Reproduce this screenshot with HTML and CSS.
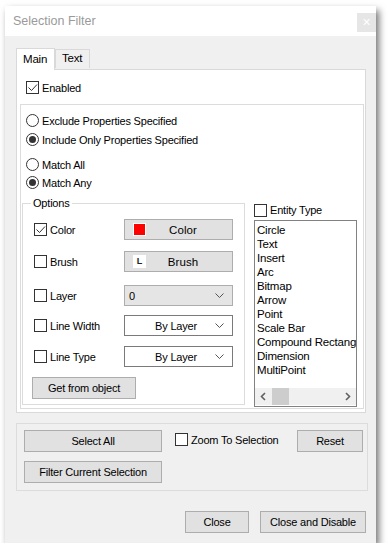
FILE: index.html
```html
<!DOCTYPE html>
<html>
<head>
<meta charset="utf-8">
<link rel="stylesheet" href="styles.css">
</head>
<body>
<div class="window">
  <div class="titlebar">
    <span class="title">Selection Filter</span>
    <span class="close-x">×</span>
  </div>
  <div class="content">
    <div class="tabs">
      <div class="tab active">Main</div>
      <div class="tab">Text</div>
    </div>
    <div class="panel">
      <label class="check enabled-row"><span class="cb checked"><svg viewBox="0 0 11 11"><polyline points="1.5,5.5 4.5,8.5 10,2.5"/></svg></span>Enabled</label>
      <div class="filterbox">
        <div class="radios">
          <label class="radio"><span class="rb"></span>Exclude Properties Specified</label>
          <label class="radio"><span class="rb on"></span>Include Only Properties Specified</label>
        </div>
        <div class="radios second">
          <label class="radio"><span class="rb"></span>Match All</label>
          <label class="radio"><span class="rb on"></span>Match Any</label>
        </div>
        <div class="lower">
          <div class="options">
            <span class="legend">Options</span>
            <div class="opt r1">
              <label class="check"><span class="cb checked"><svg viewBox="0 0 11 11"><polyline points="1.5,5.5 4.5,8.5 10,2.5"/></svg></span>Color</label>
              <div class="btn ctl"><span class="swatch"></span><span class="btxt">Color</span></div>
            </div>
            <div class="opt r2">
              <label class="check"><span class="cb"></span>Brush</label>
              <div class="btn ctl"><span class="brushicon">L</span><span class="btxt">Brush</span></div>
            </div>
            <div class="opt r3">
              <label class="check"><span class="cb"></span>Layer</label>
              <div class="combo ctl grey"><span class="ctext left">0</span><svg class="chev" viewBox="0 0 9 5"><polyline points="0.5,0.5 4.5,4.5 8.5,0.5"/></svg></div>
            </div>
            <div class="opt r4">
              <label class="check"><span class="cb"></span>Line Width</label>
              <div class="combo ctl"><span class="ctext">By Layer</span><svg class="chev" viewBox="0 0 9 5"><polyline points="0.5,0.5 4.5,4.5 8.5,0.5"/></svg></div>
            </div>
            <div class="opt r5">
              <label class="check"><span class="cb"></span>Line Type</label>
              <div class="combo ctl"><span class="ctext">By Layer</span><svg class="chev" viewBox="0 0 9 5"><polyline points="0.5,0.5 4.5,4.5 8.5,0.5"/></svg></div>
            </div>
            <div class="btn getbtn">Get from object</div>
          </div>
          <div class="entity">
            <label class="check"><span class="cb"></span>Entity Type</label>
            <div class="listbox">
              <ul class="items">
                <li>Circle</li><li>Text</li><li>Insert</li><li>Arc</li><li>Bitmap</li><li>Arrow</li><li>Point</li><li>Scale Bar</li><li>Compound Rectangle</li><li>Dimension</li><li>MultiPoint</li>
              </ul>
              <div class="hscroll">
                <svg class="arr" viewBox="0 0 17 17"><polyline points="10,5 6.5,8.5 10,12"/></svg>
                <span class="thumb"></span>
                <span class="track"></span>
                <svg class="arr" viewBox="0 0 17 17"><polyline points="7,5 10.5,8.5 7,12"/></svg>
              </div>
            </div>
          </div>
        </div>
      </div>
    </div>
    <div class="actions">
      <div class="actcol">
        <div class="btn wide">Select All</div>
        <div class="btn wide">Filter Current Selection</div>
      </div>
      <label class="check zoom"><span class="cb"></span>Zoom To Selection</label>
      <div class="btn reset">Reset</div>
    </div>
    <div class="footer">
      <div class="btn closebtn">Close</div>
      <div class="btn disablebtn">Close and Disable</div>
    </div>
  </div>
</div>
</body>
</html>
```
FILE: styles.css
```css
* { box-sizing: border-box; }
html, body { margin: 0; padding: 0; background: #ffffff; }
body {
  font-family: "Liberation Sans", Arial, sans-serif;
  font-size: 11px;
  letter-spacing: -0.2px;
  color: #000;
  padding: 6px 0 0 5px;
}
.window {
  width: 371px;
  height: 537px;
  background: #f0f0f0;
  box-shadow: 3px 4px 7px rgba(0,0,0,0.55);
  display: flex;
  flex-direction: column;
}
.titlebar {
  height: 30px;
  background: #fff;
  display: flex;
  align-items: flex-start;
  justify-content: space-between;
}
.title {
  color: #9a9a9a;
  font-size: 12.5px;
  letter-spacing: 0;
  margin: 8px 0 0 8px;
}
.close-x {
  width: 19px;
  height: 19px;
  margin-top: 7px;
  background: #e6e6e6;
  color: #fff;
  font-size: 14px;
  line-height: 18px;
  text-align: center;
}
.content {
  flex: 1;
  padding: 11px 0 0 11px;
  display: flex;
  flex-direction: column;
}
.tabs {
  display: flex;
  align-items: flex-end;
  height: 22px;
  position: relative;
  z-index: 1;
}
.tab {
  height: 19px;
  width: 35px;
  padding: 0 0 0 6px;
  border: 1px solid #d9d9d9;
  border-bottom: none;
  background: #f0f0f0;
  line-height: 17px;
  margin-bottom: 1px;
  font-size: 11.5px;
}
.tab.active {
  height: 22px;
  background: #fff;
  margin-bottom: -1px;
  line-height: 20px;
  width: 39px;
}
.panel {
  width: 350px;
  height: 344px;
  background: #fff;
  border: 1px solid #d9d9d9;
  padding: 11px 1px 0 3px;
}
.check {
  display: flex;
  align-items: center;
  white-space: nowrap;
}
.cb {
  width: 13px;
  height: 13px;
  border: 1px solid #333;
  background: #fff;
  margin-right: 3px;
  flex: none;
  display: flex;
}
.cb svg { width: 11px; height: 11px; }
.cb polyline { fill: none; stroke: #333; stroke-width: 1; }
.enabled-row { margin-left: 6px; height: 13px; }
.filterbox {
  margin-top: 10px;
  height: 305px;
  border: 1px solid #dcdcdc;
  padding: 9px 0 0 1px;
}
.radios { display: flex; flex-direction: column; gap: 6px; margin-left: 4px; }
.radios.second { margin-top: 12px; gap: 5px; }
.radio { display: flex; align-items: center; height: 13px; white-space: nowrap; }
.rb {
  width: 13px;
  height: 13px;
  border-radius: 50%;
  border: 1px solid #333;
  background: #fff;
  margin-right: 3px;
  display: flex;
  align-items: center;
  justify-content: center;
}
.rb.on::after {
  content: "";
  width: 7px;
  height: 7px;
  border-radius: 50%;
  background: #333;
}
.lower { display: flex; margin-top: 14px; }
.options {
  width: 223px;
  height: 202px;
  border: 1px solid #dcdcdc;
  position: relative;
  padding: 15px 0 0 11px;
}
.legend {
  position: absolute;
  top: -8px;
  left: 8px;
  background: #fff;
  padding: 0 2px;
  line-height: 14px;
}
.opt {
  display: flex;
  align-items: center;
  justify-content: space-between;
  width: 199px;
}
.r2 { margin-top: 11px; }
.r3 { margin-top: 13px; }
.r4 { margin-top: 9px; }
.r5 { margin-top: 10px; }
.ctl { width: 109px; height: 21px; }
.btn {
  background: #e1e1e1;
  border: 1px solid #adadad;
  display: flex;
  align-items: center;
  justify-content: center;
  white-space: nowrap;
}
.opt .btn { justify-content: flex-start; padding-left: 8px; }
.btxt { flex: 1; text-align: center; margin-right: 12px; font-size: 11.5px; letter-spacing: 0.1px; }
.swatch {
  width: 13px;
  height: 13px;
  background: #f00;
  border: 1px solid #fff;
}
.brushicon {
  width: 13px;
  height: 13px;
  background: #fff;
  font-size: 9px;
  font-weight: bold;
  color: #222;
  line-height: 13px;
  text-align: center;
}
.combo {
  border: 1px solid #7a7a7a;
  background: #fff;
  display: flex;
  align-items: center;
  padding: 0 8px 0 4px;
}
.combo.grey { background: #e5e5e5; border-color: #adadad; }
.ctext { flex: 1; text-align: center; padding-left: 8px; }
.ctext.left { text-align: left; padding-left: 0; }
.chev { width: 9px; height: 5px; }
.chev polyline { fill: none; stroke: #555; stroke-width: 1; }
.getbtn { width: 104px; height: 22px; margin: 10px 0 0 -2px; }
.entity { margin-left: 9px; }
.entity .check { height: 14px; }
.listbox {
  margin-top: 3px;
  width: 103px;
  height: 187px;
  border: 1px solid #828282;
  background: #fff;
  display: flex;
  flex-direction: column;
  overflow: hidden;
}
.items {
  list-style: none;
  margin: 0;
  padding: 2px 0 0 2px;
  flex: 1;
  white-space: nowrap;
  overflow: hidden;
  font-size: 11.5px;
}
.items li { height: 14px; line-height: 14px; }
.hscroll {
  height: 17px;
  background: #f0f0f0;
  display: flex;
  margin-bottom: 1px;
}
.arr { width: 17px; height: 17px; flex: none; }
.arr polyline { fill: none; stroke: #606060; stroke-width: 1.6; }
.thumb { width: 17px; background: #cdcdcd; }
.track { flex: 1; }
.actions {
  margin-top: 10px;
  width: 352px;
  height: 68px;
  border: 1px solid #dcdcdc;
  display: flex;
  align-items: flex-start;
  padding: 6px 4px 0 7px;
}
.actcol { display: flex; flex-direction: column; gap: 9px; }
.wide { width: 138px; height: 22px; }
.zoom { margin: 3px 0 0 13px; }
.reset { width: 66px; height: 22px; margin-left: auto; }
.footer {
  display: flex;
  justify-content: flex-end;
  gap: 11px;
  margin-top: 20px;
  width: 350px;
}
.closebtn { width: 64px; height: 22px; }
.disablebtn { width: 106px; height: 22px; }
```
